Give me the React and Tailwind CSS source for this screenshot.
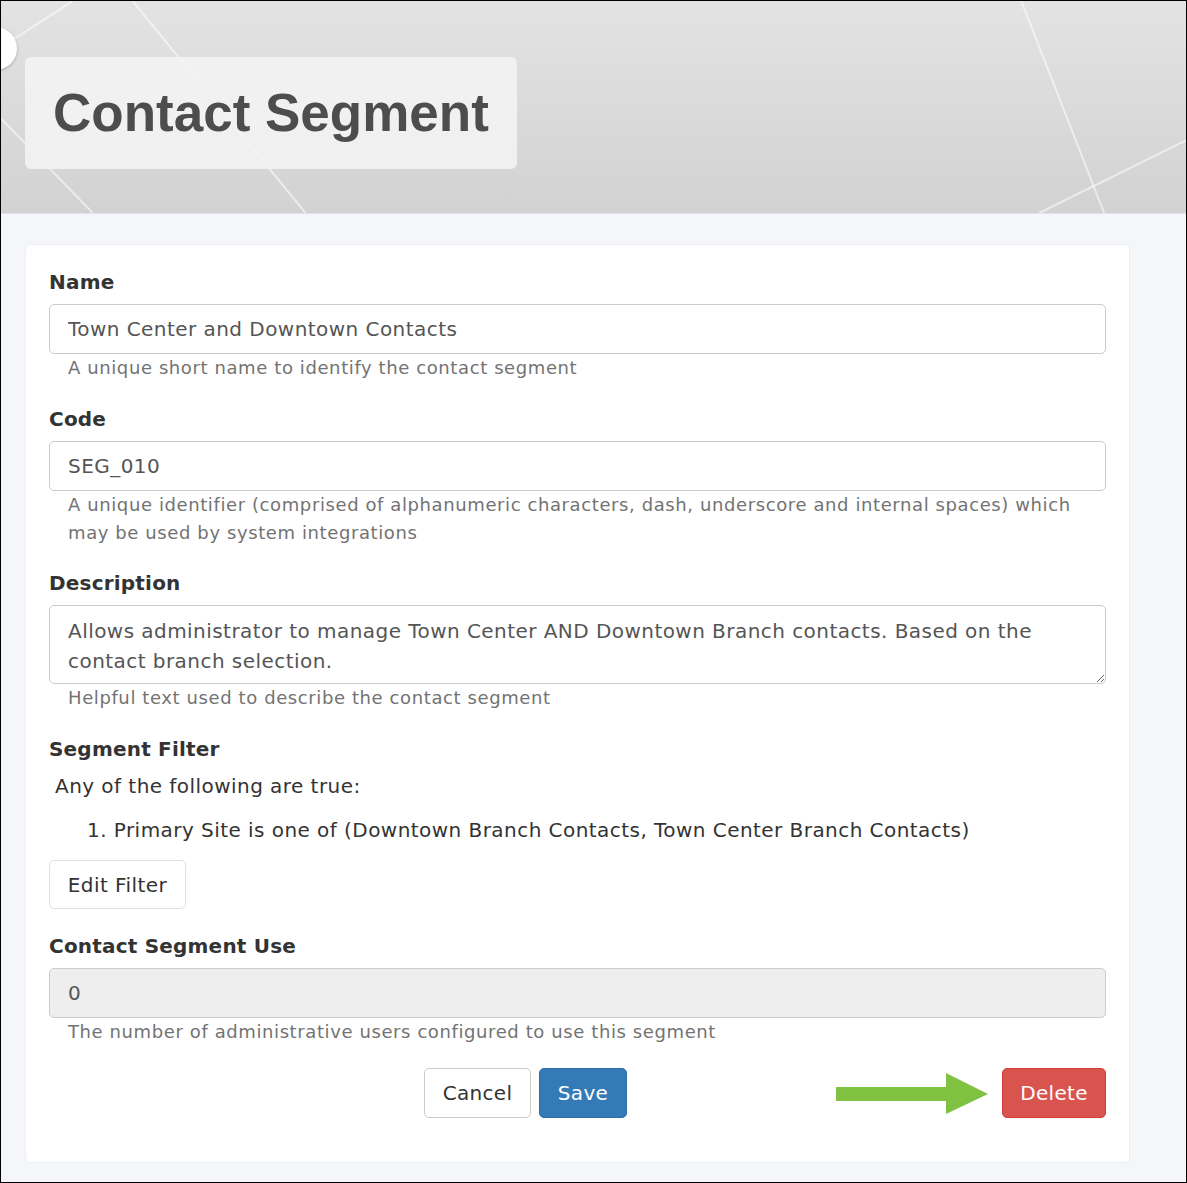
import { useState } from 'react'

const SANS = "font-['DejaVu_Sans',Verdana,sans-serif]"

function HeaderLines() {
  return (
    <svg className="absolute inset-0 w-full h-full" viewBox="0 0 1187 213" preserveAspectRatio="none" fill="none">
      <g stroke="rgba(255,255,255,0.55)" strokeWidth="2">
        <path d="M72 0 L10 40" />
        <path d="M132 0 L305 213" />
        <path d="M0 118 L92 213" />
        <path d="M1022 0 L1105 213" />
        <path d="M1040 213 L1187 140" />
      </g>
    </svg>
  )
}

function Field({ label, children, help }) {
  return (
    <div>
      <div className="text-[20px] leading-[28px] font-bold tracking-[0.2px] text-[#333]">{label}</div>
      <div className="mt-2">{children}</div>
      {help && <div className="pl-[19px] text-[18px] leading-[28px] tracking-[0.6px] text-[#737373]">{help}</div>}
    </div>
  )
}

function TextInput({ value, disabled }) {
  return (
    <input
      readOnly
      value={value}
      className={`block w-full h-[50px] px-[18px] text-[20px] tracking-[0.45px] text-[#555] border border-[#ccc] rounded-[5px] outline-none ${
        disabled ? 'bg-[#eee]' : 'bg-white'
      }`}
    />
  )
}

function GreenArrow() {
  return (
    <svg className="absolute right-[calc(100%+14px)] top-[5px] w-[152px] h-[42px]" viewBox="0 0 152 42">
      <path d="M0 14 L110 14 L110 0 L152 21 L110 41 L110 28 L0 28 Z" fill="#80c142" />
    </svg>
  )
}

export default function App() {
  const [name] = useState('Town Center and Downtown Contacts')
  const [code] = useState('SEG_010')
  const [desc] = useState(
    'Allows administrator to manage Town Center AND Downtown Branch contacts. Based on the contact branch selection.'
  )

  return (
    <div className={`relative h-[1183px] border border-black bg-[#f4f6f9] overflow-hidden ${SANS}`}>
      {/* Banner */}
      <div className="relative h-[213px] bg-gradient-to-b from-[#e3e3e3] to-[#d2d2d2] border-b border-[#dfe5ec]">
        <HeaderLines />
        <div className="absolute left-[-27px] top-[26px] w-[43px] h-[43px] rounded-full bg-white shadow-[0_1px_3px_rgba(0,0,0,0.25)]" />
        <div className="relative pt-[56px] pl-[24px]">
          <div className="inline-flex items-center h-[112px] w-[492px] pl-[28px] rounded-[6px] bg-[#f3f3f3]/90">
            <h1 className="font-['Liberation_Sans',Arial,sans-serif] font-bold text-[53px] leading-none text-[#4d4d4d] -mt-[2px]">
              Contact Segment
            </h1>
          </div>
        </div>
      </div>

      {/* Form card */}
      <div className="ml-[24px] mt-[30px] w-[1105px] bg-white rounded-[5px] border border-[#eceff3] px-[23px] pt-[23px] pb-[44px]">
        <Field label="Name" help="A unique short name to identify the contact segment">
          <TextInput value={name} />
        </Field>

        <div className="mt-[23px]">
          <Field
            label="Code"
            help={
              <>
                A unique identifier (comprised of alphanumeric characters, dash, underscore and internal spaces) which
                <br />
                may be used by system integrations
              </>
            }
          >
            <TextInput value={code} />
          </Field>
        </div>

        <div className="mt-[22px]">
          <Field label="Description" help="Helpful text used to describe the contact segment">
            <textarea
              readOnly
              value={desc}
              className="block w-full h-[79px] px-[18px] py-[10px] text-[20px] leading-[30px] tracking-[0.45px] text-[#555] border border-[#ccc] rounded-[5px] outline-none"
            />
          </Field>
        </div>

        <div className="mt-[23px]">
          <div className="text-[20px] leading-[28px] font-bold tracking-[0.2px] text-[#333]">Segment Filter</div>
          <div className="mt-[9px] pl-[6px] text-[20px] leading-[28px] tracking-[0.45px] text-[#333]">
            Any of the following are true:
          </div>
          <ol className="mt-[16px] pl-[38px] text-[20px] leading-[28px] tracking-[0.45px] text-[#333]">
            <li>1. Primary Site is one of (Downtown Branch Contacts, Town Center Branch Contacts)</li>
          </ol>
          <button className="mt-[16px] h-[49px] w-[137px] border border-[#e0e0e0] rounded-[5px] bg-white text-[20px] tracking-[0.45px] text-[#333]">
            Edit Filter
          </button>
        </div>

        <div className="mt-[23px]">
          <Field label="Contact Segment Use" help="The number of administrative users configured to use this segment">
            <TextInput value="0" disabled />
          </Field>
        </div>

        {/* Actions */}
        <div className="mt-[22px] flex">
          <div className="flex-1 flex justify-center gap-[8px]">
            <button className="h-[50px] w-[107px] border border-[#ccc] rounded-[5px] bg-white text-[20px] tracking-[0.3px] text-[#333]">
              Cancel
            </button>
            <button className="h-[50px] w-[88px] border border-[#2e6da4] rounded-[5px] bg-[#337ab7] text-[20px] tracking-[0.3px] text-white">
              Save
            </button>
          </div>
          <div className="relative">
            <GreenArrow />
            <button className="h-[50px] w-[104px] border border-[#d43f3a] rounded-[5px] bg-[#d9534f] text-[20px] tracking-[0.3px] text-white">
              Delete
            </button>
          </div>
        </div>
      </div>
    </div>
  )
}
